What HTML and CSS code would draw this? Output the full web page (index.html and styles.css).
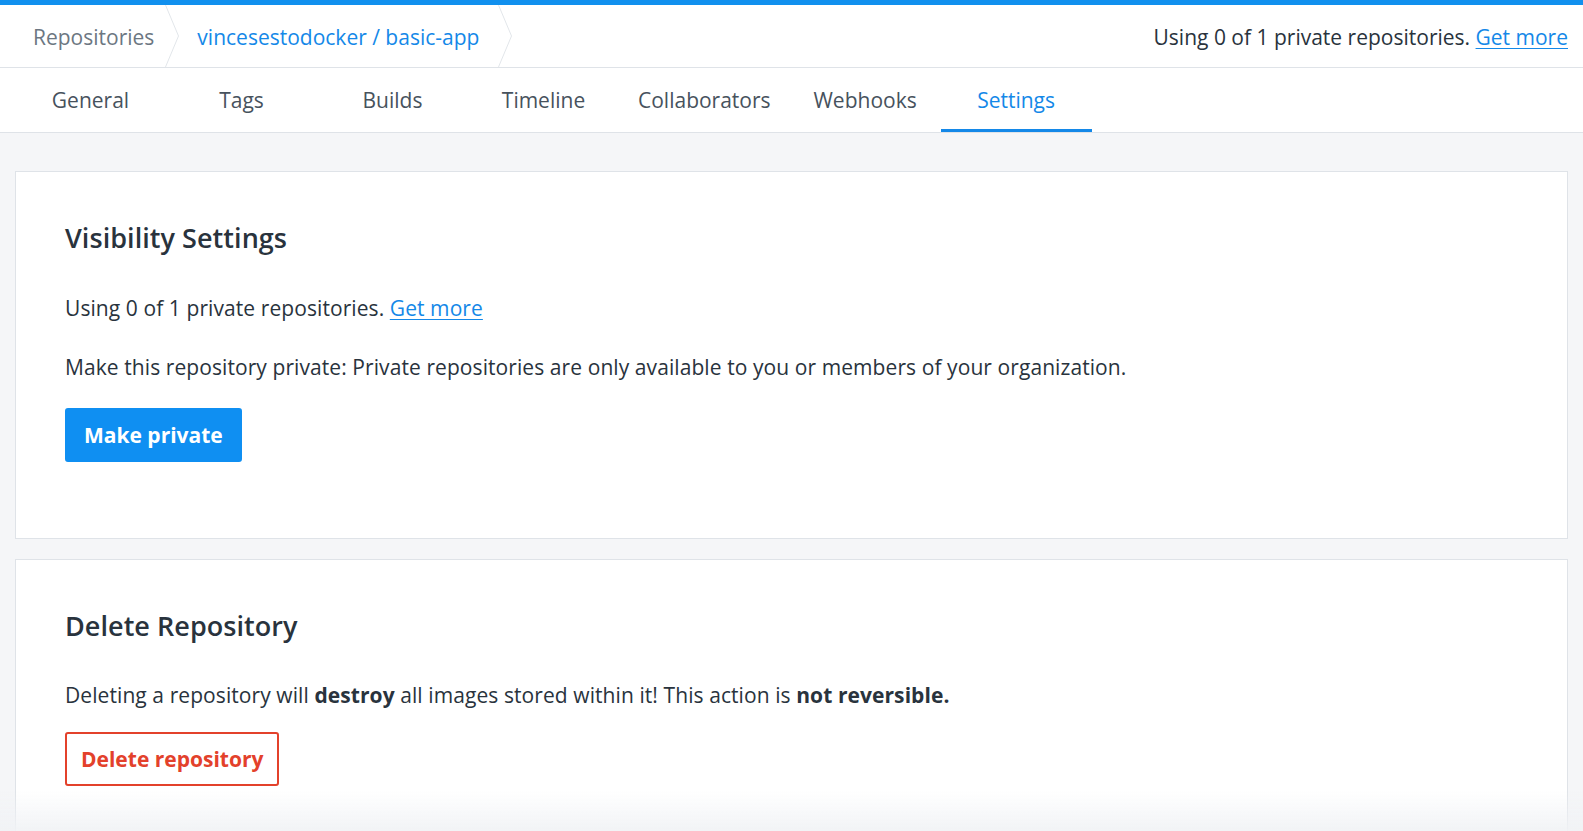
FILE: index.html
```html
<!DOCTYPE html>
<html lang="en">
<head>
<meta charset="utf-8">
<title>vincesestodocker / basic-app - Settings</title>
<link rel="stylesheet" href="styles.css">
</head>
<body>
<div class="topline"></div>
<header class="header">
  <nav class="crumbs">
    <span class="crumb crumb-muted">Repositories</span>
    <svg class="sep" width="15" height="62" viewBox="0 0 15 62"><polyline points="0.5,0 13.5,31 0.5,62" fill="none" stroke="#e2e6ea" stroke-width="1"/></svg>
    <a class="crumb crumb-link" href="#">vincesestodocker / basic-app</a>
    <svg class="sep" width="15" height="62" viewBox="0 0 15 62"><polyline points="0.5,0 13.5,31 0.5,62" fill="none" stroke="#e2e6ea" stroke-width="1"/></svg>
  </nav>
  <div class="quota">Using 0 of 1 private repositories. <a href="#" class="link">Get more</a></div>
</header>
<nav class="tabs">
  <a class="tab" href="#">General</a>
  <a class="tab" href="#">Tags</a>
  <a class="tab" href="#">Builds</a>
  <a class="tab" href="#">Timeline</a>
  <a class="tab" href="#">Collaborators</a>
  <a class="tab" href="#">Webhooks</a>
  <a class="tab tab-active" href="#">Settings</a>
</nav>
<main class="main">
  <section class="card">
    <h2 class="card-title">Visibility Settings</h2>
    <p class="text">Using 0 of 1 private repositories. <a href="#" class="link">Get more</a></p>
    <p class="text text-last">Make this repository private: Private repositories are only available to you or members of your organization.</p>
    <button class="btn btn-primary">Make private</button>
  </section>
  <section class="card">
    <h2 class="card-title card-title-del">Delete Repository</h2>
    <p class="text text-del">Deleting a repository will <strong>destroy</strong> all images stored within it! This action is <strong>not reversible.</strong></p>
    <button class="btn btn-danger">Delete repository</button>
  </section>
</main>
<div class="fade"></div>
</body>
</html>
```

FILE: styles.css
```css
html, body {
  margin: 0;
  padding: 0;
  overflow: hidden;
  height: 100%;
}
body {
  font-family: "Open Sans", "Liberation Sans", sans-serif;
  color: #29333d;
  background: #f5f6f8;
}
.topline {
  height: 5px;
  background: #1190ee;
}
.header {
  box-sizing: border-box;
  height: 63px;
  padding: 2px 15px 0 33px;
  background: #fff;
  border-bottom: 1px solid #dfe3e8;
  display: flex;
  align-items: center;
  justify-content: space-between;
}
.crumbs {
  display: flex;
  align-items: center;
  height: 60px;
}
.crumb {
  font-size: 21px;
  line-height: 30px;
  text-decoration: none;
}
.crumb-muted {
  color: #6c7782;
  margin-right: 11px;
}
.crumb-link {
  color: #1488e8;
  margin-right: 19px;
}
.sep {
  display: block;
  margin: -2px 17px 0 0;
}
.quota {
  font-size: 21px;
  line-height: 30px;
  color: #29333d;
}
.link {
  color: #1488e8;
  text-decoration: underline;
  text-underline-offset: 3px;
  text-decoration-thickness: 1px;
}
.tabs {
  display: flex;
  height: 64px;
  background: #fff;
  border-bottom: 1px solid #dfe3e8;
  padding-left: 15px;
}
.tab {
  min-width: 151px;
  box-sizing: border-box;
  padding: 0 19px;
  display: flex;
  align-items: center;
  justify-content: center;
  font-size: 21px;
  color: #47525d;
  text-decoration: none;
}
.tab-active {
  color: #1488e8;
  box-shadow: inset 0 -3px 0 #1488e8;
}
.main {
  padding: 38px 15px 0;
}
.card {
  background: #fff;
  border: 1px solid #dfe3e8;
  padding: 48px 49px 76px;
  margin-bottom: 20px;
}
.card-title {
  margin: 0 0 37px;
  font-size: 27px;
  line-height: 36px;
  font-weight: 600;
  color: #29333d;
  letter-spacing: 0.05px;
}
.card-title-del {
  margin-bottom: 36px;
}
.text {
  margin: 0 0 29px;
  font-size: 21px;
  line-height: 30px;
  letter-spacing: 0.08px;
}
.text-last {
  margin-bottom: 26px;
}
.text-del {
  margin-bottom: 22px;
}
.text strong {
  font-weight: 700;
}
.btn {
  font-family: "Open Sans", "Liberation Sans", sans-serif;
  font-size: 21px;
  font-weight: 700;
  height: 54px;
  border-radius: 3px;
  cursor: pointer;
  display: block;
}
.btn-primary {
  padding: 0 17px;
  background: #0f8ff2;
  border: 2px solid #0f8ff2;
  color: #fff;
}
.btn-danger {
  padding: 0 14px;
  background: #fff;
  border: 2px solid #e3412b;
  color: #e3412b;
}
.fade {
  position: fixed;
  left: 0;
  right: 0;
  bottom: 0;
  height: 40px;
  background: linear-gradient(to bottom, rgba(243, 245, 247, 0), rgba(240, 242, 245, 0.9));
  pointer-events: none;
}
```
